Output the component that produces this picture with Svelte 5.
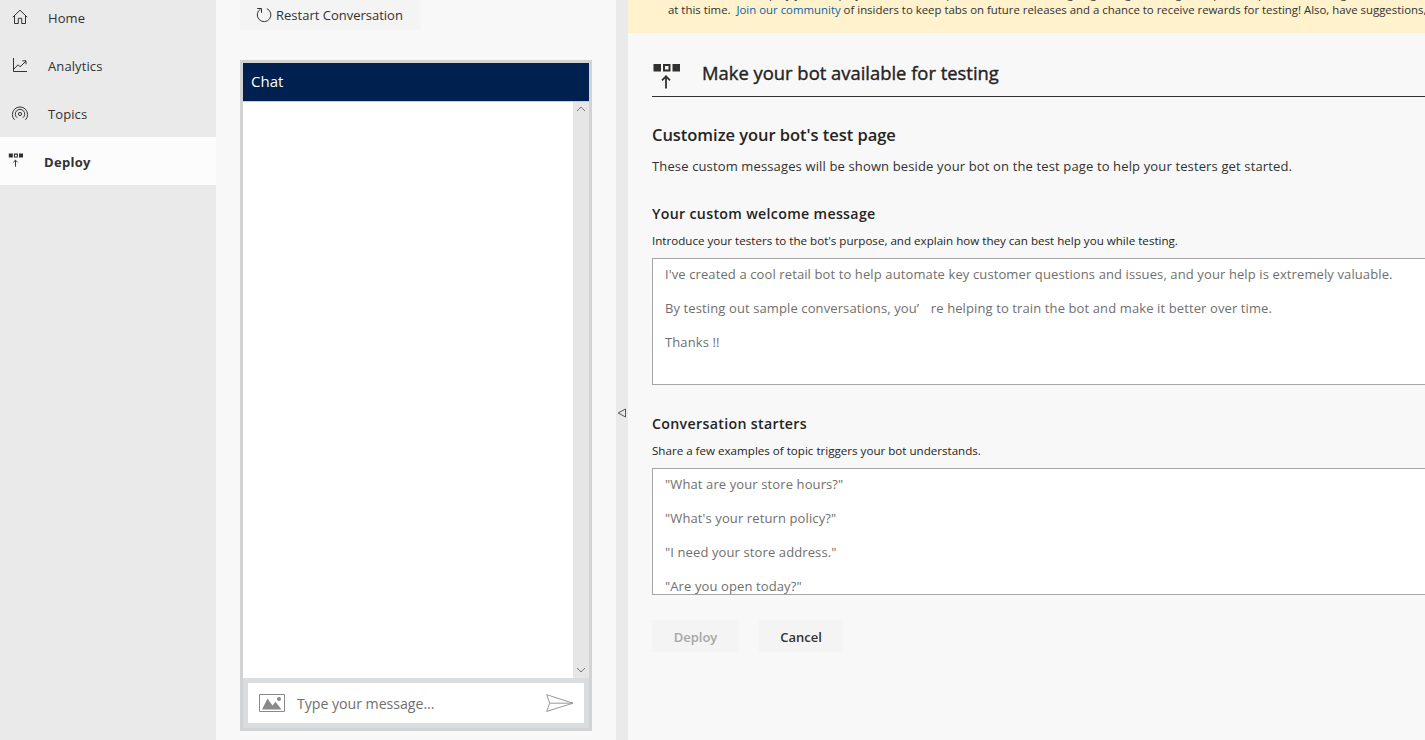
<script>
  const nav = [
    { label: 'Home', icon: 'home' },
    { label: 'Analytics', icon: 'chart' },
    { label: 'Topics', icon: 'topics' },
    { label: 'Deploy', icon: 'deploy', active: true }
  ];
  const welcome = "I've created a cool retail bot to help automate key customer questions and issues, and your help is extremely valuable.";
  const starters = ['"What are your store hours?"', '"What\'s your return policy?"', '"I need your store address."', '"Are you open today?"'];
</script>

{#snippet deployIcon(w, h)}
  <svg width={w} height={h} viewBox="0 0 28 26" fill="none" stroke="#323130">
    <path d="M1.5 1h7.5v7.5H1.5zM20.5 1H28v7.5h-7.5z" fill="#323130" stroke="none" />
    <path d="M12 2h5.5v5.5H12z" stroke-width="2" />
    <path d="M14 25.5V13.5M10 17.3l4-4 4 4" stroke-width="1.8" />
  </svg>
{/snippet}

<div class="app">
  <nav class="side">
    {#each nav as item}
      <div class="item" class:active={item.active}>
        <span class="ico">
          {#if item.icon === 'home'}
            <svg width="16" height="16" viewBox="0 0 16 16" fill="none" stroke="#333"><path d="M.8 8.2 8 1.2l7.2 7M2.5 7v7.5h3.8V9.3h3.4v5.2h3.8V7" /></svg>
          {:else if item.icon === 'chart'}
            <svg width="16" height="16" viewBox="0 0 16 16" fill="none" stroke="#333"><path d="M1.5 1v13.5H15M2 12l4-4.2 2 2 6-5.6M10.5 3.8H14v3.5" /></svg>
          {:else if item.icon === 'topics'}
            <svg class="wide" width="18" height="16" viewBox="0 0 18 16" fill="none" stroke="#333"><circle cx="9" cy="9" r="1.6" /><path d="M6.2 12.8a4.7 4.7 0 1 1 5.6 0M3.5 14.8a7.6 7.6 0 1 1 11 0" /></svg>
          {:else}
            {@render deployIcon(15, 14)}
          {/if}
        </span>
        <span class="label">{item.label}</span>
      </div>
    {/each}
  </nav>

  <section class="test">
    <button class="restart">
      <svg width="16" height="16" viewBox="0 0 16 16" fill="none" stroke="#333"><path d="M10.8 1.6A6.8 6.8 0 1 1 4.6 2M1.2 1.5h4.3v4.3" /></svg>
      <span>Restart Conversation</span>
    </button>
    <div class="chat">
      <header><span>Chat</span></header>
      <div class="log">
        <div class="track">
          <svg width="10" height="6" viewBox="0 0 10 6" fill="none" stroke="#777"><path d="M1 5l4-4 4 4" /></svg>
          <svg width="10" height="6" viewBox="0 0 10 6" fill="none" stroke="#777"><path d="M1 1l4 4 4-4" /></svg>
        </div>
      </div>
      <div class="compose">
        <div class="box">
          <svg width="26" height="18" viewBox="0 0 26 18"><path d="M.5.5h25v17H.5z" fill="none" stroke="#8a8a8a" /><path d="M3 15.5 8.5 4.5l5 7 3-3.8 6 7.8z" fill="#8a8a8a" /><circle cx="20" cy="5" r="2" fill="#8a8a8a" /></svg>
          <span class="hint">Type your message...</span>
          <svg width="28" height="18" viewBox="0 0 28 18" fill="none" stroke="#999"><path d="M.7.7 27 9.2.7 17.4l3-8.2zM3.7 9.2H27" /></svg>
        </div>
      </div>
    </div>
  </section>

  <div class="splitter">
    <svg width="10" height="10" viewBox="0 0 10 10" fill="none" stroke="#555"><path d="M1.2 5 8.5 1v8z" /></svg>
  </div>

  <main>
    <div class="banner">
      <p>You can't use or deploy your employee bot as it is in preview and still undergoing changes through our preview period, including its features</p>
      <p>at this time.&nbsp; <a href="#community">Join our community</a> of insiders to keep tabs on future releases and a chance to receive rewards for testing! Also, have suggestions,</p>
    </div>
    <div class="content">
      <div class="title">{@render deployIcon(28, 26)}<h1>Make your bot available for testing</h1></div>
      <h2>Customize your bot's test page</h2>
      <p class="lead">These custom messages will be shown beside your bot on the test page to help your testers get started.</p>
      <h3>Your custom welcome message</h3>
      <p class="small">Introduce your testers to the bot's purpose, and explain how they can best help you while testing.</p>
      <div class="area">
        <p>{welcome}</p>
        <p>By testing out sample conversations, you<i>’</i>re helping to train the bot and make it better over time.</p>
        <p>Thanks !!</p>
      </div>
      <h3 class="second">Conversation starters</h3>
      <p class="small">Share a few examples of topic triggers your bot understands.</p>
      <div class="area">
        {#each starters as s}<p>{s}</p>{/each}
      </div>
      <div class="actions"><button class="off">Deploy</button><button>Cancel</button></div>
    </div>
  </main>
</div>

<style>
  :global(body) { margin: 0; overflow: hidden; }
  .app { display: flex; width: 1425px; height: 740px; overflow: hidden; background: #f8f8f8; color: #323130; font: 13px "Open Sans", "Noto Sans", sans-serif; }
  .app :global(*) { box-sizing: border-box; }
  p, h1, h2, h3 { margin: 0; white-space: nowrap; }
  svg { display: block; flex: none; }
  button { font: inherit; color: inherit; border: 0; background: #f4f4f4; padding: 0; }
  .side { width: 216px; background: #eaeaea; flex: none; margin-top: -7px; }
  .item { height: 48px; display: flex; align-items: center; padding-left: 11px; }
  .ico { width: 37px; display: flex; }
  .ico svg { margin-left: 1px; }
  .ico .wide { margin-left: 0; }
  .label { padding-top: 2px; letter-spacing: .1px; }
  .active { background: #fcfcfc; font-weight: 700; padding-left: 7px; }
  .active .ico svg { margin-left: 1px; margin-top: -2px; }
  .active .label { letter-spacing: .3px; }
  .test { width: 400px; flex: none; padding-left: 24px; }
  .restart { width: 181px; height: 30px; display: flex; align-items: center; padding-left: 16px; gap: 4px; }
  .chat { margin-top: 30px; width: 352px; height: 671px; border: 3px solid #d2d3d4; display: flex; flex-direction: column; }
  header { height: 38px; background: #00204f; color: #fff; font-size: 15px; line-height: 37px; padding-left: 8px; }
  .log { flex: 1; background: #fff; display: flex; justify-content: flex-end; border-top: 1px solid #ccc; }
  .track { width: 16px; background: #e6e6e6; display: flex; flex-direction: column; justify-content: space-between; padding: 4px 3px 5px; }
  .compose { height: 50px; background: #d9dde0; padding: 5px; }
  .box { height: 40px; background: #fff; display: flex; align-items: center; padding: 0 10px 0 11px; }
  .hint { flex: 1; padding-left: 12px; font-size: 14.2px; letter-spacing: -.05px; color: #6f6f6f; }
  .splitter { width: 12px; background: #eaeaea; flex: none; display: flex; align-items: center; padding: 86px 0 0 1px; }
  main { flex: 1; min-width: 0; }
  .banner { height: 33px; background: #fff2cc; overflow: hidden; padding-left: 40px; font-size: 11.4px; line-height: 16px; display: flex; flex-direction: column; justify-content: flex-end; padding-bottom: 15px; }
  a { color: #0b63a5; text-decoration: none; }
  .content { padding-left: 24px; }
  .title { height: 64px; border-bottom: 1px solid #323130; display: flex; padding-top: 30px; gap: 22px; }
  h1 { font-size: 18.4px; line-height: 20px; font-weight: 400; -webkit-text-stroke: .4px; color: #252423; }
  h2 { font-size: 16.5px; line-height: 24px; font-weight: 600; letter-spacing: -.04px; margin-top: 26px; color: #252423; }
  .lead { line-height: 20px; margin-top: 9px; letter-spacing: .137px; }
  h3 { font-size: 14.2px; line-height: 20px; font-weight: 600; letter-spacing: .32px; margin-top: 28px; color: #252423; }
  .small { font-size: 11.6px; line-height: 16px; margin-top: 9px; color: #252423; }
  .area { height: 127px; margin-top: 9px; border: 1px solid #a6a6a6; border-right: 0; background: #fff; padding: 7px 12px; overflow: hidden; color: #706f6e; letter-spacing: .11px; }
  .area p { line-height: 17px; margin-bottom: 17px; }
  .area i { font-style: normal; display: inline-block; width: 14px; }
  .second { margin-top: 29px; }
  .actions { display: flex; gap: 20px; margin-top: 25px; font-weight: 600; }
  .actions button { width: 84px; height: 32px; padding-top: 2px; }
  .actions .off { width: 87px; color: #a6a6a6; }
</style>
